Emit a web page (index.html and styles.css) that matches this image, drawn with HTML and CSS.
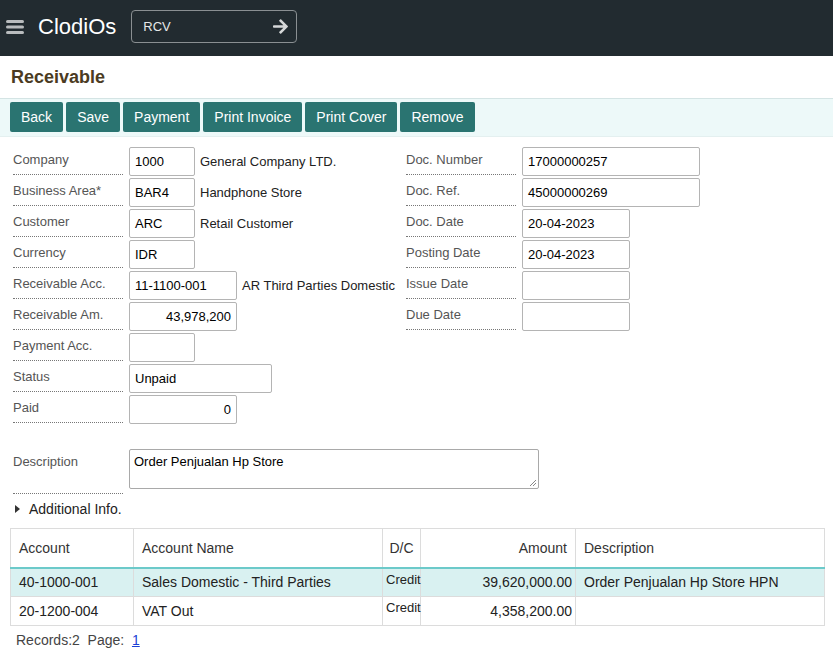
FILE: index.html
```html
<!DOCTYPE html>
<html>
<head>
<meta charset="utf-8">
<link rel="stylesheet" href="styles.css">
</head>
<body>
<header class="topbar">
  <svg class="burger" width="18" height="16" viewBox="0 0 18 16"><rect x="0" y="1" width="18" height="3" rx="1.5" fill="#b9bcbe"/><rect x="0" y="6.5" width="18" height="3" rx="1.5" fill="#b9bcbe"/><rect x="0" y="12" width="18" height="3" rx="1.5" fill="#b9bcbe"/></svg>
  <div class="logo">ClodiOs</div>
  <div class="search">
    <span class="search-text">RCV</span>
    <svg class="arrow" width="15" height="15" viewBox="0 0 448 448"><path fill="#d6d8d9" d="M190 35l22-22c10-10 25-10 34 0l194 194c10 10 10 25 0 34L246 435c-10 10-25 10-34 0l-22-22c-10-10-10-25 0-35l120-114H24c-13 0-24-11-24-24v-32c0-13 11-24 24-24h286L190 70c-10-10-10-25 0-35z"/></svg>
  </div>
</header>
<h1 class="title">Receivable</h1>
<div class="toolbar">
  <button class="btn">Back</button>
  <button class="btn">Save</button>
  <button class="btn">Payment</button>
  <button class="btn">Print Invoice</button>
  <button class="btn">Print Cover</button>
  <button class="btn">Remove</button>
</div>
<div class="form">
  <div class="col col-left">
    <div class="row"><div class="lbl">Company</div><div class="inp w66">1000</div><span class="desc">General Company LTD.</span></div>
    <div class="row"><div class="lbl">Business Area*</div><div class="inp w66">BAR4</div><span class="desc">Handphone Store</span></div>
    <div class="row"><div class="lbl">Customer</div><div class="inp w66">ARC</div><span class="desc">Retail Customer</span></div>
    <div class="row"><div class="lbl">Currency</div><div class="inp w66">IDR</div></div>
    <div class="row"><div class="lbl">Receivable Acc.</div><div class="inp w108">11-1100-001</div><span class="desc">AR Third Parties Domestic</span></div>
    <div class="row"><div class="lbl">Receivable Am.</div><div class="inp w108 right">43,978,200</div></div>
    <div class="row"><div class="lbl">Payment Acc.</div><div class="inp w66"></div></div>
    <div class="row"><div class="lbl">Status</div><div class="inp w143">Unpaid</div></div>
    <div class="row"><div class="lbl">Paid</div><div class="inp w108 right">0</div></div>
  </div>
  <div class="col col-right">
    <div class="row"><div class="lbl">Doc. Number</div><div class="inp w178">17000000257</div></div>
    <div class="row"><div class="lbl">Doc. Ref.</div><div class="inp w178">45000000269</div></div>
    <div class="row"><div class="lbl">Doc. Date</div><div class="inp w108">20-04-2023</div></div>
    <div class="row"><div class="lbl">Posting Date</div><div class="inp w108">20-04-2023</div></div>
    <div class="row"><div class="lbl">Issue Date</div><div class="inp w108"></div></div>
    <div class="row"><div class="lbl">Due Date</div><div class="inp w108"></div></div>
  </div>
</div>
<div class="desc-row">
  <div class="lbl lbl-tall">Description</div>
  <div class="textarea">Order Penjualan Hp Store<svg class="grip" width="9" height="9" viewBox="0 0 9 9"><path d="M8 2L2 8M8 5L5 8" stroke="#888" stroke-width="1"/></svg></div>
</div>
<div class="addinfo"><span class="tri"></span>Additional Info.</div>
<table class="grid">
  <colgroup><col class="c1"><col class="c2"><col class="c3"><col class="c4"><col class="c5"></colgroup>
  <thead>
    <tr><th>Account</th><th>Account Name</th><th class="center">D/C</th><th class="num">Amount</th><th>Description</th></tr>
  </thead>
  <tbody>
    <tr class="sel"><td>40-1000-001</td><td>Sales Domestic - Third Parties</td><td class="dc">Credit</td><td class="num">39,620,000.00</td><td>Order Penjualan Hp Store HPN</td></tr>
    <tr><td>20-1200-004</td><td>VAT Out</td><td class="dc">Credit</td><td class="num">4,358,200.00</td><td></td></tr>
  </tbody>
</table>
<div class="pager">Records:2&nbsp; Page:&nbsp; <a href="#">1</a></div>
</body>
</html>
```
FILE: styles.css
```css
* { box-sizing: border-box; }
body {
  margin: 0;
  font-family: "Liberation Sans", Arial, sans-serif;
  font-size: 13px;
  color: #333;
  background: #fff;
}
.topbar {
  height: 56px;
  background: #222b30;
  display: flex;
  align-items: center;
}
.burger { margin-left: 6px; margin-top: -2px; }
.logo {
  margin-left: 14px;
  margin-top: -2px;
  color: #fff;
  font-size: 22px;
  line-height: 26px;
}
.search {
  align-self: flex-start;
  margin-top: 10px;
  margin-left: 15px;
  width: 166px;
  height: 33px;
  border: 1px solid #8a8f92;
  border-radius: 4px;
  display: flex;
  align-items: center;
  justify-content: space-between;
  padding: 0 8px 0 11px;
}
.search-text { color: #e6e8e9; font-size: 13px; }
.arrow { display: block; }
.title {
  margin: 0;
  height: 42px;
  line-height: 42px;
  padding-left: 11px;
  font-size: 18px;
  font-weight: bold;
  color: #4b3b22;
}
.toolbar {
  border-top: 1px solid #d4e4e4;
  border-bottom: 1px solid #e4f0f0;
  background: #edf9f9;
  padding: 3px 10px 4px;
  display: flex;
  gap: 2px;
}
.btn {
  height: 30px;
  background: #2a7471;
  color: #fff;
  border: none;
  border-radius: 2px;
  font-family: "Liberation Sans", Arial, sans-serif;
  font-size: 14px;
  padding: 0 11px;
  margin-right: 1px;
}
.form {
  display: flex;
  margin-top: 10px;
}
.col-left { width: 406px; padding-left: 13px; flex: none; }
.col-right { padding-left: 0; }
.row {
  display: flex;
  align-items: flex-start;
  height: 31px;
}
.lbl {
  width: 110px;
  height: 28px;
  border-bottom: 1px dotted #777;
  color: #555;
  padding-top: 5px;
  flex: none;
}
.inp {
  margin-left: 6px;
  height: 29px;
  border: 1px solid #b4b4b4;
  border-radius: 2px;
  padding: 0 5px;
  line-height: 27px;
  color: #000;
  flex: none;
}
.inp.right { text-align: right; }
.w66 { width: 66px; }
.w108 { width: 108px; }
.w143 { width: 143px; }
.w178 { width: 178px; }
.desc { margin-left: 5px; line-height: 29px; color: #222; white-space: nowrap; }
.desc-row {
  display: flex;
  align-items: flex-start;
  margin-top: 23px;
  padding-left: 13px;
}
.lbl-tall { height: 45px; width: 110px; }
.textarea {
  position: relative;
  margin-left: 6px;
  width: 410px;
  height: 40px;
  border: 1px solid #a9a9a9;
  border-radius: 2px;
  padding: 4px 4px;
  color: #000;
  line-height: 15px;
}
.grip { position: absolute; right: 1px; bottom: 1px; }
.addinfo {
  display: flex;
  align-items: center;
  height: 20px;
  margin-top: 5px;
  padding-left: 15px;
  font-size: 14px;
  color: #222;
}
.tri {
  width: 0; height: 0;
  border-left: 5px solid #333;
  border-top: 4px solid transparent;
  border-bottom: 4px solid transparent;
  margin-right: 9px;
}
.grid {
  margin: 9px 0 0 10px;
  width: 814px;
  border-collapse: collapse;
  table-layout: fixed;
  font-size: 14px;
  color: #222;
}
.c1 { width: 123px; }
.c2 { width: 249px; }
.c3 { width: 38px; }
.c4 { width: 155px; }
.c5 { width: 249px; }
.grid th, .grid td { border: 1px solid #dcdcdc; text-align: left; }
.grid th {
  font-weight: normal;
  color: #333;
  height: 39px;
  padding: 0 8px;
  border-bottom: 2px solid #6ccaca;
}
.grid td { height: 29px; padding: 0 8px; }
.grid th.center { text-align: center; padding: 0; }
.grid .num { text-align: right; padding-right: 8px; }
.grid td.num { padding-right: 3px; }
.grid td.dc { font-size: 13px; vertical-align: top; padding: 3px 0 0 3px; }
.grid tr.sel td { background: #d9f1f1; }
.pager {
  margin-top: 6px;
  padding-left: 16px;
  font-size: 14px;
  color: #444;
}
.pager a { color: #1a3fd6; }
```
